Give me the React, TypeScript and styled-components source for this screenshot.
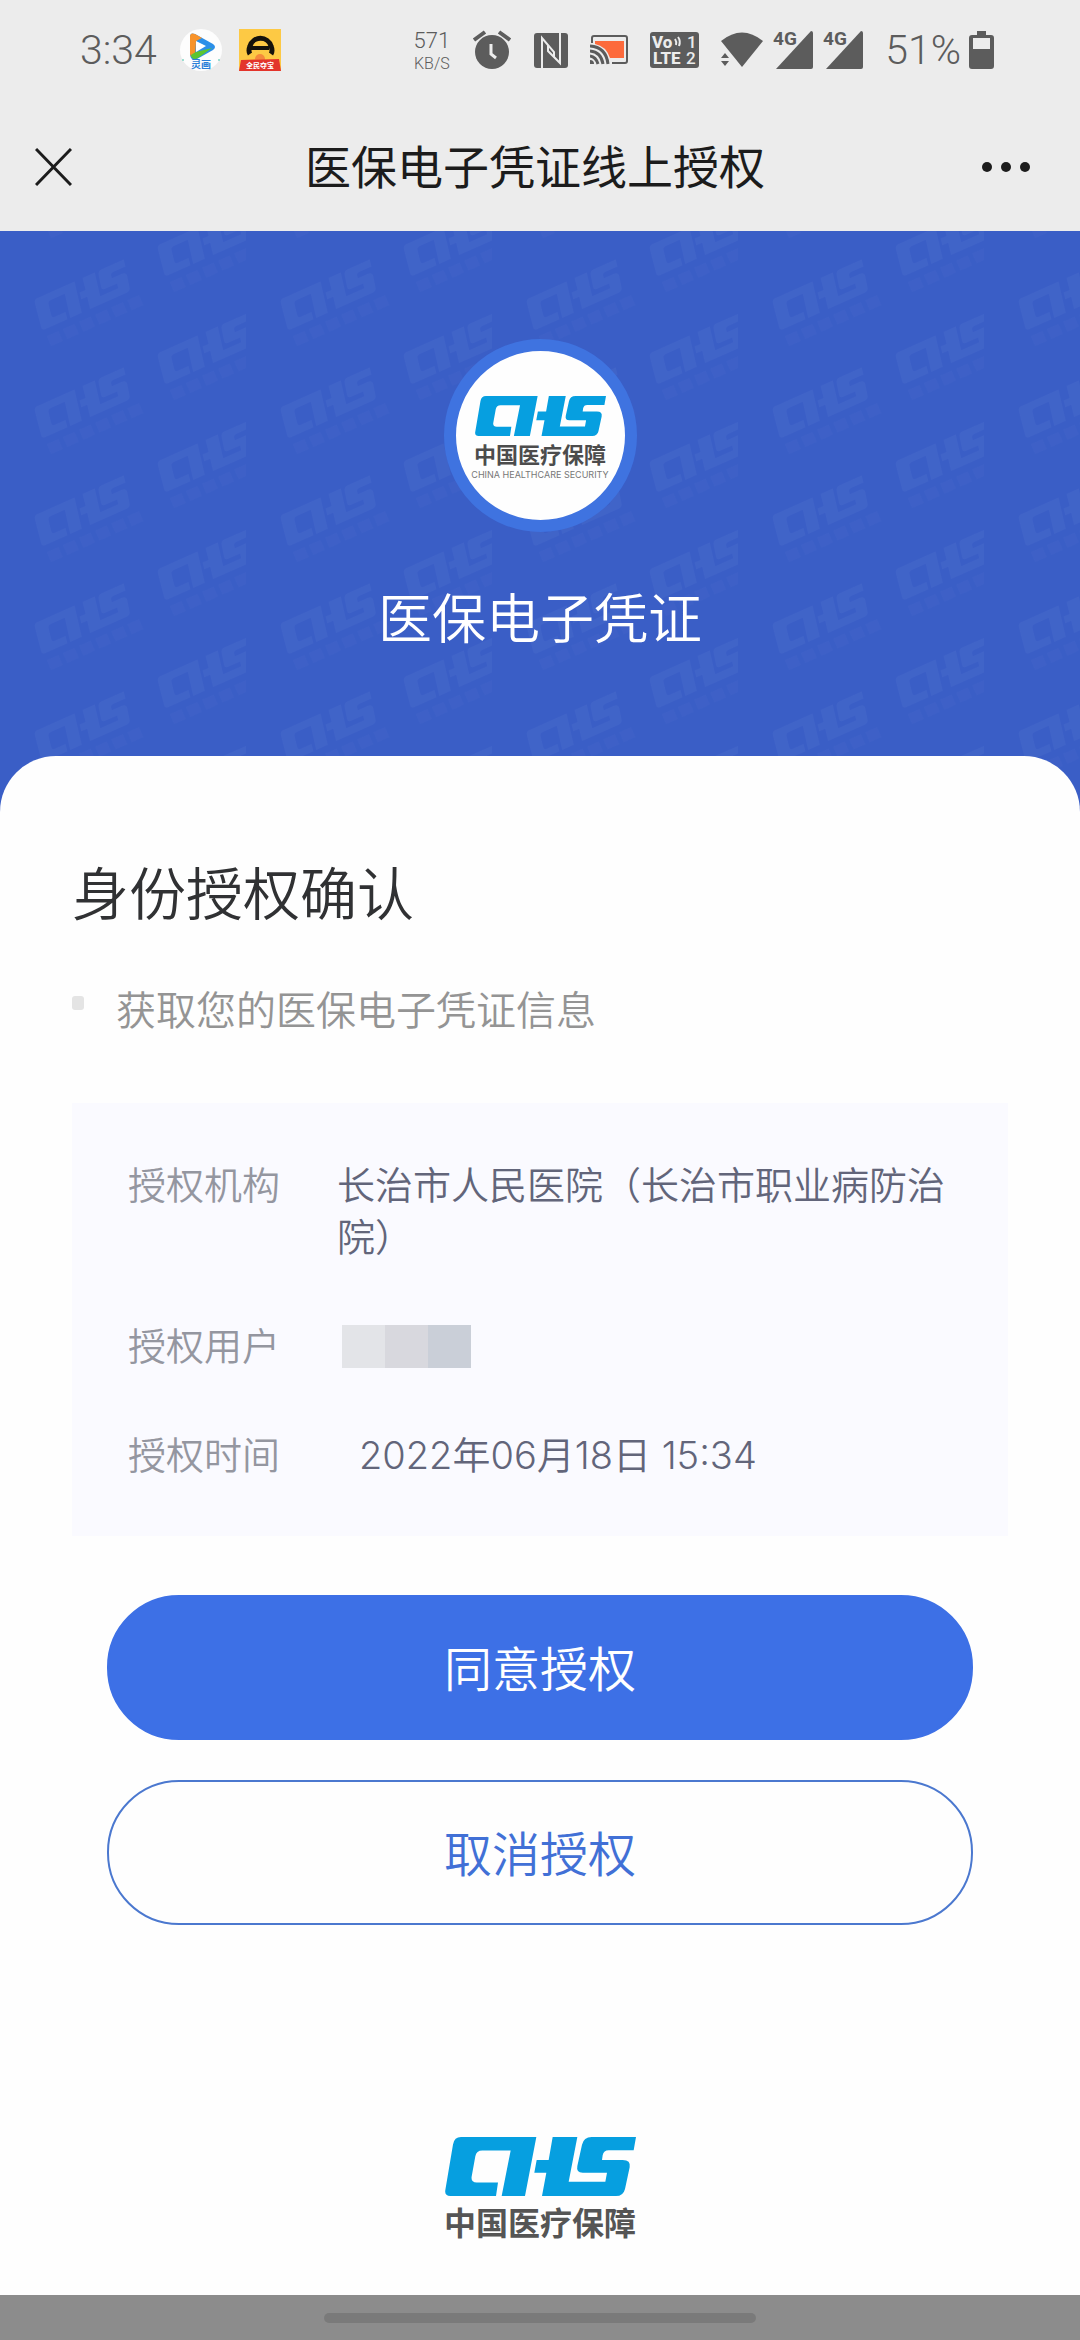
import React from 'react';
import styled, { createGlobalStyle } from 'styled-components';

const GlobalStyle = createGlobalStyle`
  * { box-sizing: border-box; }
  body {
    margin: 0;
    background: #fefefe;
    font-family: Inter, 'Noto Sans CJK SC', sans-serif;
    font-weight: 350;
  }
  button { font: inherit; cursor: pointer; }
  h1, h2, p, dl, dd, dt, ul { margin: 0; padding: 0; font-weight: inherit; }
  svg { display: block; flex: none; }
`;

const Page = styled.div`
  display: flex;
  flex-direction: column;
  min-height: 100vh;
`;

const StatusBar = styled.div`
  display: flex;
  align-items: center;
  justify-content: space-between;
  height: 100px;
  padding: 0 86px 0 80px;
  background: #ececec;
  color: #5c5c5c;
`;

const Group = styled.div<{ $gap: number }>`
  display: flex;
  align-items: center;
  gap: ${(p) => p.$gap}px;
`;

const Clock = styled.span`
  font-family: Roboto, sans-serif;
  font-weight: 300;
  font-size: 41px;
  line-height: 48px;
`;

const Speed = styled.span`
  display: flex;
  flex-direction: column;
  align-items: center;
  font-family: Roboto, sans-serif;
  font-weight: 300;
`;

const SpeedValue = styled.span`
  font-size: 22px;
  line-height: 26px;
`;

const SpeedUnit = styled.span`
  font-size: 16px;
  line-height: 19px;
`;

const TitleBar = styled.header`
  display: flex;
  align-items: center;
  justify-content: space-between;
  height: 131px;
  padding: 2px 50px 0 35px;
  background: #ececec;
  color: #1c1c1c;
`;

const IconButton = styled.button<{ $end?: number }>`
  display: flex;
  padding: 12px ${(p) => p.$end ?? 0}px 12px 0;
  border: 0;
  background: none;
  color: inherit;
`;

const Title = styled.h1`
  font-size: 46px;
  font-weight: 400;
  line-height: 64px;
`;

const Hero = styled.section`
  display: grid;
  height: 582px;
  background: #3a5ec6;
  color: #fff;
`;

const Watermark = styled.svg`
  grid-area: 1 / 1;
  width: 100%;
  height: 100%;
`;

const HeroContent = styled.div`
  grid-area: 1 / 1;
  display: flex;
  flex-direction: column;
  align-items: center;
  gap: 56px;
  padding-top: 108px;
`;

const Badge = styled.div`
  display: flex;
  flex-direction: column;
  align-items: center;
  width: 193px;
  height: 193px;
  padding-top: 45px;
  border: 12px solid #3f73e0;
  border-radius: 50%;
  background: #fefefe;
  color: #4c4c4c;

  svg { margin-bottom: 4px; }
`;

const BrandName = styled.span<{ $size: number; $line: number }>`
  font-size: ${(p) => p.$size}px;
  line-height: ${(p) => p.$line}px;
  font-weight: 700;
  white-space: nowrap;
`;

const BrandSub = styled.span`
  font-size: 9px;
  line-height: 10px;
  font-weight: 400;
  color: #777;
  white-space: nowrap;
`;

const HeroTitle = styled.p`
  font-size: 54px;
  line-height: 64px;
`;

const Card = styled.main`
  position: relative;
  flex: 1;
  display: flex;
  flex-direction: column;
  margin-top: -57px;
  padding: 103px 72px 48px;
  border-radius: 56px 56px 0 0;
  background: #fefefe;
`;

const Heading = styled.h2`
  font-size: 57px;
  line-height: 72px;
  color: #303133;
`;

const Scopes = styled.ul`
  margin-top: 52px;
  list-style: none;
`;

const Scope = styled.li`
  display: flex;
  gap: 32px;
  font-size: 40px;
  line-height: 56px;
  color: #949494;

  &::before {
    content: '';
    width: 12px;
    height: 14px;
    margin-top: 13px;
    border-radius: 3px;
    background: #e4e4e4;
  }
`;

const Panel = styled.dl`
  display: flex;
  flex-direction: column;
  gap: 57px;
  margin-top: 64px;
  padding: 56px 56px 55px;
  background: #fafaff;
  font-size: 38px;
  line-height: 52px;
`;

const Row = styled.div`
  display: flex;
`;

const Label = styled.dt`
  flex: none;
  width: 209px;
  color: #9496a0;
`;

const Value = styled.dd<{ $inset?: number }>`
  display: flex;
  align-items: center;
  padding-left: ${(p) => p.$inset ?? 0}px;
  color: #62657a;
`;

const Block = styled.span<{ $tone: string }>`
  width: 43px;
  height: 43px;
  background: ${(p) => p.$tone};
`;

const Actions = styled.div`
  display: flex;
  flex-direction: column;
  gap: 40px;
  margin-top: 59px;
  padding: 0 35px;
`;

const ActionButton = styled.button<{ $primary?: boolean }>`
  height: 145px;
  padding: 4px 0 0;
  border: 2px solid ${(p) => (p.$primary ? '#3d70e6' : '#4b78cf')};
  border-radius: 72px;
  background: ${(p) => (p.$primary ? '#3d70e6' : 'transparent')};
  color: ${(p) => (p.$primary ? '#fff' : '#4170d6')};
  font-size: 48px;
  line-height: 64px;
`;

const Brand = styled.footer`
  display: flex;
  flex-direction: column;
  align-items: center;
  gap: 8px;
  margin-top: 212px;
  color: #555;
`;

const HomeBar = styled.div`
  display: flex;
  align-items: center;
  justify-content: center;
  height: 45px;
  background: #8c8c8c;
`;

const HomePill = styled.div`
  width: 40%;
  height: 10px;
  border-radius: 5px;
  background: #7a7a7a;
`;

const LOGO_LEFT =
  'M33 0H274L240 175H170L197 40H112Q94 40 91 57L80 117Q77 135 95 135H159L153 175H16Q-2 175 1 157L24 22Q28 0 48 0Z';
const LOGO_RIGHT =
  'M323 0H397L371 133H481L486 106H413Q393 106 397 86L411 23Q416 0 440 0H573L566 39H491Q476 39 473 54L471 68H533Q558 68 554 90L540 154Q535 175 513 175H291L304 106H268L275 68H311Z';

function ChsLogo({ width, height }: { width: number; height: number }) {
  return (
    <svg width={width} height={height} viewBox="0 0 573 175" preserveAspectRatio="none" fill="#069fe0" role="img" aria-label="CHS">
      <path d={LOGO_LEFT} />
      <path d={LOGO_RIGHT} />
    </svg>
  );
}

function WatermarkPattern() {
  return (
    <Watermark aria-hidden="true">
      <defs>
        <g id="mark" fill="#8fa0e6" fillOpacity="0.08">
          <g transform="rotate(-24) scale(0.18) translate(-286 -130)">
            <path d={LOGO_LEFT} />
            <path d={LOGO_RIGHT} />
            <path d="M10 215h70v60h-70zM108 215h70v60h-70zM206 215h70v60h-70zM304 215h70v60h-70zM402 215h70v60h-70zM500 215h70v60h-70z" fillOpacity="0.04" />
          </g>
        </g>
        <pattern id="tile" width="246" height="108" patternUnits="userSpaceOnUse" y="17">
          <use href="#mark" x="86" y="54" />
          <use href="#mark" x="209" y="0" />
          <use href="#mark" x="209" y="108" />
        </pattern>
      </defs>
      <rect width="100%" height="100%" fill="url(#tile)" />
    </Watermark>
  );
}

function VideoAppIcon() {
  return (
    <svg width="44" height="44" viewBox="0 0 44 44">
      <circle cx="22" cy="22" r="21" fill="#fdfdfd" />
      <path d="M11 9q0-5 5-3l18 10q4 3 0 6L18 31q-6 2-7-4z" fill="#2b8fe8" />
      <path d="M11 9q0-5 5-3l7 4-6 3-1 16q-4 1-5-3z" fill="#f8932a" />
      <path d="M12 27q3-2 5-3l16-4-14 10q-6 3-7-3z" fill="#5cc531" />
      <path d="M17 13v11l10-6z" fill="#fff" />
      <text x="22" y="40" textAnchor="middle" fontSize="10" fontWeight="700" fill="#2a7fd8">灵画</text>
      <circle cx="4" cy="32" r="1" fill="#7ed6c4" />
      <circle cx="40" cy="32" r="1" fill="#7ed6c4" />
    </svg>
  );
}

function YellowAppIcon() {
  return (
    <svg width="42" height="42" viewBox="0 0 42 42">
      <rect width="42" height="42" fill="#fdc944" />
      <circle cx="21" cy="30" r="5" fill="#f58a3c" />
      <path d="M11 25q-2-3 0-8a11 11 0 0 1 21 0q2 5 0 8" fill="none" stroke="#15120c" strokeWidth="5" />
      <path d="M12 19h18" stroke="#15120c" strokeWidth="4" />
      <path d="M2 31l38-1 2 12H0z" fill="#e3342b" />
      <text x="21" y="39" textAnchor="middle" fontSize="7" fontWeight="700" fill="#fff">全民夺宝</text>
    </svg>
  );
}

function AlarmIcon() {
  return (
    <svg width="40" height="40" viewBox="0 0 40 40" fill="none" stroke="currentColor">
      <circle cx="20" cy="22" r="17" fill="currentColor" stroke="none" />
      <path d="M2 10L13 2M27 2l11 8" strokeWidth="4" />
      <path d="M19 14v10l5 4" stroke="#ececec" strokeWidth="3" />
    </svg>
  );
}

function NfcIcon() {
  return (
    <svg width="34" height="35" viewBox="0 0 34 35">
      <rect width="34" height="35" rx="3" fill="currentColor" />
      <path d="M8 35V5l12 14v5M14 12v6l12 12V0" fill="none" stroke="#ececec" strokeWidth="2" />
    </svg>
  );
}

function CastIcon() {
  return (
    <svg width="38" height="30" viewBox="0 0 38 30" fill="none" stroke="currentColor" strokeWidth="2">
      <path d="M5 6h29v17H20Q16 11 5 9z" fill="#fd6a3c" stroke="none" />
      <path d="M2 8V3q0-2 2-2h31q2 0 2 2v23q0 2-2 2H22" />
      <path d="M0 11q16 1 18 18M0 16q11 1 13 13M0 21q6 1 8 8" strokeWidth="3" />
      <path d="M0 25q4 0 4 4H0z" fill="currentColor" stroke="none" />
    </svg>
  );
}

function VolteIcon() {
  return (
    <svg width="49" height="36" viewBox="0 0 49 36" fill="#ececec" fontFamily="Roboto, sans-serif" fontWeight="800">
      <rect width="49" height="36" rx="3" fill="#5c5c5c" />
      <text x="2" y="16" fontSize="17">Vo</text>
      <text x="3" y="32" fontSize="17">LTE</text>
      <text x="37" y="16" fontSize="17" fontWeight="500">1</text>
      <text x="36" y="32" fontSize="17" fontWeight="500">2</text>
      <path d="M25 7q2 3 1 6M28 5q3 4 1 9" fill="none" stroke="#ececec" strokeWidth="2" />
    </svg>
  );
}

function WifiIcon() {
  return (
    <svg width="42" height="36" viewBox="0 0 42 36" fill="currentColor">
      <path d="M0 9Q21-8 42 9L21 35z" />
      <path d="M0 26l4-5 4 5zM0 29h8l-4 5z" />
    </svg>
  );
}

function SignalIcon() {
  return (
    <svg width="40" height="46" viewBox="0 -4 40 46" fill="currentColor">
      <path d="M38 0q2 0 2 2v34q0 2-2 2H3z" />
      <text x="0" y="14" fontFamily="Roboto, sans-serif" fontSize="19" fontWeight="700" stroke="#ececec" strokeWidth="2" paintOrder="stroke">4G</text>
    </svg>
  );
}

function BatteryIcon() {
  return (
    <svg width="25" height="38" viewBox="0 0 25 38">
      <path d="M8 0h9v4h5q3 0 3 3v28q0 3-3 3H3q-3 0-3-3V7q0-3 3-3h5z" fill="currentColor" />
      <rect x="4" y="7" width="17" height="11" fill="#ececec" />
    </svg>
  );
}

export default function App() {
  return (
    <Page>
      <GlobalStyle />
      <StatusBar>
        <Group $gap={22}>
          <Clock>3:34</Clock>
          <Group $gap={16}>
            <VideoAppIcon />
            <YellowAppIcon />
          </Group>
        </Group>
        <Group $gap={22}>
          <Speed>
            <SpeedValue>571</SpeedValue>
            <SpeedUnit>KB/S</SpeedUnit>
          </Speed>
          <AlarmIcon />
          <NfcIcon />
          <CastIcon />
          <VolteIcon />
          <Group $gap={10}>
            <WifiIcon />
            <SignalIcon />
            <SignalIcon />
          </Group>
          <Group $gap={8}>
            <Clock>51%</Clock>
            <BatteryIcon />
          </Group>
        </Group>
      </StatusBar>
      <TitleBar>
        <IconButton type="button" aria-label="关闭" $end={16}>
          <svg width="37" height="38" viewBox="0 0 37 38" stroke="currentColor" strokeWidth="3">
            <path d="M1 1l35 36M36 1L1 37" />
          </svg>
        </IconButton>
        <Title>医保电子凭证线上授权</Title>
        <IconButton type="button" aria-label="更多">
          <svg width="48" height="10" viewBox="0 0 48 10" fill="currentColor">
            <circle cx="5" cy="5" r="5" />
            <circle cx="24" cy="5" r="5" />
            <circle cx="43" cy="5" r="5" />
          </svg>
        </IconButton>
      </TitleBar>
      <Hero>
        <WatermarkPattern />
        <HeroContent>
          <Badge>
            <ChsLogo width={131} height={40} />
            <BrandName $size={22} $line={30}>中国医疗保障</BrandName>
            <BrandSub>CHINA HEALTHCARE SECURITY</BrandSub>
          </Badge>
          <HeroTitle>医保电子凭证</HeroTitle>
        </HeroContent>
      </Hero>
      <Card>
        <Heading>身份授权确认</Heading>
        <Scopes>
          <Scope>获取您的医保电子凭证信息</Scope>
        </Scopes>
        <Panel>
          <Row>
            <Label>授权机构</Label>
            <Value>长治市人民医院（长治市职业病防治院）</Value>
          </Row>
          <Row>
            <Label>授权用户</Label>
            <Value $inset={5}>
              <Block $tone="#e3e4e8" />
              <Block $tone="#d8d8de" />
              <Block $tone="#cacfd8" />
            </Value>
          </Row>
          <Row>
            <Label>授权时间</Label>
            <Value $inset={22}>2022年06月18日 15:34</Value>
          </Row>
        </Panel>
        <Actions>
          <ActionButton type="button" $primary>同意授权</ActionButton>
          <ActionButton type="button">取消授权</ActionButton>
        </Actions>
        <Brand>
          <ChsLogo width={191} height={59} />
          <BrandName $size={32} $line={40}>中国医疗保障</BrandName>
        </Brand>
      </Card>
      <HomeBar>
        <HomePill />
      </HomeBar>
    </Page>
  );
}
